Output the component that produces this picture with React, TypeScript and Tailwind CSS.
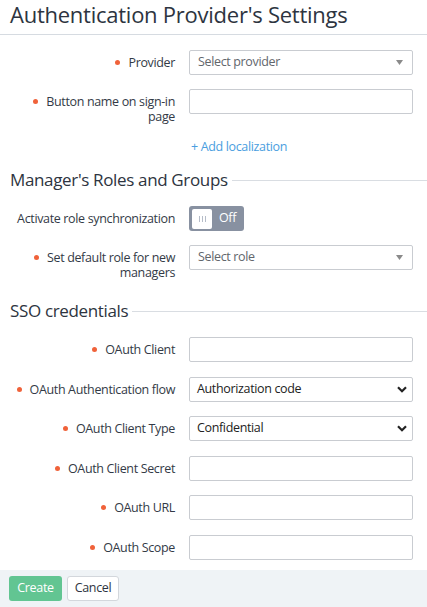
import React from 'react';

const font = { fontFamily: '"Open Sans", "Noto Sans", sans-serif' };

// Required-field marker shown before a label
const Dot = () => <span className="inline-block w-[5px] h-[5px] rounded-full bg-[#f0623a] mr-[8px] align-middle relative -top-[1px]" />;

interface RowProps {
  label: React.ReactNode;
  required?: boolean;
  children: React.ReactNode;
  className?: string;
}

const Row: React.FC<RowProps> = ({ label, required, children, className = '' }) => (
  <div className={`flex items-start ${className}`}>
    <div className="w-[189px] pl-[10px] pr-[14px] pt-[5px] text-right text-[12.5px] tracking-[-0.35px] leading-[15px] text-[#333a46] shrink-0">
      {required && <Dot />}
      {label}
    </div>
    <div className="w-[224px]">{children}</div>
  </div>
);

const TextInput = () => (
  <div className="h-[25px] border border-[#c9ccd1] rounded-[2px] bg-white" />
);

// Custom dropdown with a small triangle caret
const Dropdown = ({ placeholder }: { placeholder: string }) => (
  <div className="h-[25px] border border-[#c9ccd1] rounded-[2px] bg-white flex items-center justify-between pl-[8px] pr-[9px] text-[12.5px] tracking-[-0.35px] text-[#62666c]">
    <span>{placeholder}</span>
    <svg width="7" height="5" viewBox="0 0 7 5"><path d="M0 0h7L3.5 5z" fill="#8a8a8a" /></svg>
  </div>
);

// Native-looking select with a bold chevron
const NativeSelect = ({ value }: { value: string }) => (
  <div className="h-[25px] border border-[#c9ccd1] rounded-[2px] bg-white flex items-center justify-between pl-[7px] pr-[5px] text-[12.5px] tracking-[-0.35px] text-[#222]">
    <span>{value}</span>
    <svg width="10" height="7" viewBox="0 0 10 7"><path d="M1 1.2l4 4 4-4" stroke="#222" strokeWidth="2.2" fill="none" /></svg>
  </div>
);

const Toggle = () => (
  <div className="w-[55px] h-[25px] rounded-[3px] bg-[#8891a1] flex items-center pl-[3px]">
    <div className="w-[20px] h-[20px] rounded-[2px] bg-white flex items-center justify-center gap-[2px]">
      <span className="w-[1px] h-[6px] bg-[#b5bcc8]" />
      <span className="w-[1px] h-[6px] bg-[#b5bcc8]" />
      <span className="w-[1px] h-[6px] bg-[#b5bcc8]" />
    </div>
    <span className="ml-[7px] text-[12.5px] tracking-[-0.35px] text-white">Off</span>
  </div>
);

const Section = ({ title, className = '' }: { title: string; className?: string }) => (
  <div className={`flex items-center pl-[10px] ${className}`}>
    <h2 className="text-[17px] tracking-[-0.35px] leading-[22px] text-[#2d3440] whitespace-nowrap">{title}</h2>
    <div className="flex-1 h-px bg-[#d9dde2] ml-[4px]" />
  </div>
);

export default function App() {
  return (
    <div className="w-[427px] min-h-[607px] bg-white" style={font}>
      <h1 className="h-[35px] border-b border-[#d6dbe1] pl-[10px] text-[22px] tracking-[-0.25px] leading-[28px] text-[#2d3440]">
        Authentication Provider's Settings
      </h1>

      <Row required label="Provider" className="mt-[15px]">
        <Dropdown placeholder="Select provider" />
      </Row>
      <Row required label="Button name on sign-in page" className="mt-[14px]">
        <TextInput />
      </Row>
      <div className="pl-[191px] mt-[15px] text-[12.5px] tracking-[-0.35px] leading-[16px] text-[#4a9ee0]">+ Add localization</div>

      <Section title="Manager's Roles and Groups" className="mt-[14px]" />
      <Row label="Activate role synchronization" className="mt-[15px]">
        <Toggle />
      </Row>
      <Row required label="Set default role for new managers" className="mt-[14px]">
        <Dropdown placeholder="Select role" />
      </Row>

      <Section title="SSO credentials" className="mt-[20px]" />
      <Row required label="OAuth Client" className="mt-[15px]">
        <TextInput />
      </Row>
      <Row required label="OAuth Authentication flow" className="mt-[15px]">
        <NativeSelect value="Authorization code" />
      </Row>
      <Row required label="OAuth Client Type" className="mt-[14px]">
        <NativeSelect value="Confidential" />
      </Row>
      <Row required label="OAuth Client Secret" className="mt-[15px]">
        <TextInput />
      </Row>
      <Row required label="OAuth URL" className="mt-[14px]">
        <TextInput />
      </Row>
      <Row required label="OAuth Scope" className="mt-[15px]">
        <TextInput />
      </Row>

      <div className="mt-[10px] h-[37px] bg-[#eff3f6] flex items-center pl-[9px] gap-[5px]">
        <button className="h-[25px] w-[53px] rounded-[3px] bg-[#62c592] text-white text-[12.5px] tracking-[-0.35px]">Create</button>
        <button className="h-[25px] w-[52px] rounded-[3px] bg-white border border-[#d3d7dc] text-[#2d3440] text-[12.5px] tracking-[-0.35px]">Cancel</button>
      </div>
    </div>
  );
}
